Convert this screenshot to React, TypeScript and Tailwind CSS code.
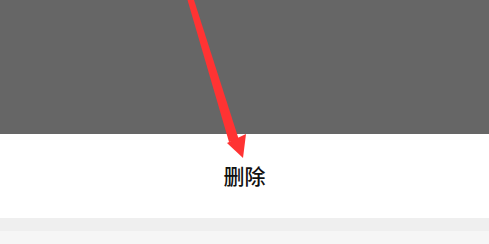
export default function App() {
  return (
    <div className="relative w-[489px] h-[244px] overflow-hidden bg-white">
      <div className="h-[134px] bg-[#666666]" />
      <div className="h-[84px] flex items-center justify-center">
        <span className="text-[21px] text-[#111111] font-medium font-['Noto_Sans_CJK_SC',sans-serif]">删除</span>
      </div>
      <div className="h-[13px] bg-[#efefef]" />
      <div className="h-[13px] bg-[#f6f6f6]" />
      <svg className="absolute left-0 top-0 pointer-events-none" width="489" height="244" viewBox="0 0 489 244">
        <polygon points="187.5,0 194,0 239,140 229,142" fill="#ff3333" />
        <polygon points="227,143 246,134 243,158" fill="#ff3333" />
      </svg>
    </div>
  );
}
